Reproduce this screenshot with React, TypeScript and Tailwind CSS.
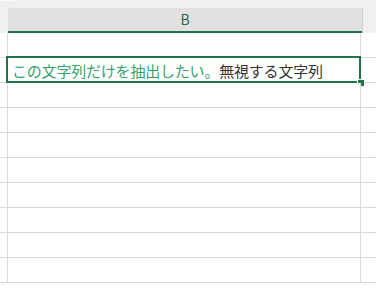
import React from "react";

const font = { fontFamily: '"Noto Sans CJK JP", "Noto Sans", sans-serif' };

function Row({ selected = false }: { selected?: boolean }) {
  return (
    <div className="flex h-[25px] border-b border-[#dadada]">
      <div className="w-[8px] shrink-0 border-r border-[#dadada] bg-white" />
      <div className="relative w-[353px] shrink-0 border-r border-[#dadada] bg-white">
        {selected && (
          <>
            <div className="absolute -left-[2px] -top-[2px] -right-[1px] -bottom-[1px] border-2 border-[#217346]" />
            <div className="absolute -right-[4px] -bottom-[4px] h-[6px] w-[6px] bg-[#217346] outline outline-1 outline-white" />
            <div
              className="flex h-full items-center pl-[4px] text-[15px] leading-none tracking-[-0.2px] whitespace-nowrap"
              style={font}
            >
              <span className="text-[#31a36b]">この文字列だけを抽出したい。</span>
              <span className="text-[#333333]">無視する文字列</span>
            </div>
          </>
        )}
      </div>
      <div className="flex-1 bg-white" />
    </div>
  );
}

export default function App() {
  return (
    <div className="h-[290px] w-[376px] overflow-hidden bg-white">
      <div className="relative h-[8px] bg-[#f0f0f0]">
        <div className="absolute left-0 top-0 h-[1px] w-[15px] bg-[#fafafa]" />
      </div>
      <div className="flex h-[25px]">
        <div className="w-[8px] shrink-0 bg-[#f0f0f0]" />
        <div
          className="flex w-[354px] shrink-0 items-center justify-center border-b-2 border-[#217346] bg-[#e1e1e1] text-[14px] text-[#2e6b4a]"
          style={font}
        >
          B
        </div>
        <div className="flex-1 border-l border-[#cfcfcf] bg-[#f0f0f0]" />
      </div>
      <Row />
      <Row selected />
      <Row />
      <Row />
      <Row />
      <Row />
      <Row />
      <Row />
      <Row />
      <Row />
    </div>
  );
}
